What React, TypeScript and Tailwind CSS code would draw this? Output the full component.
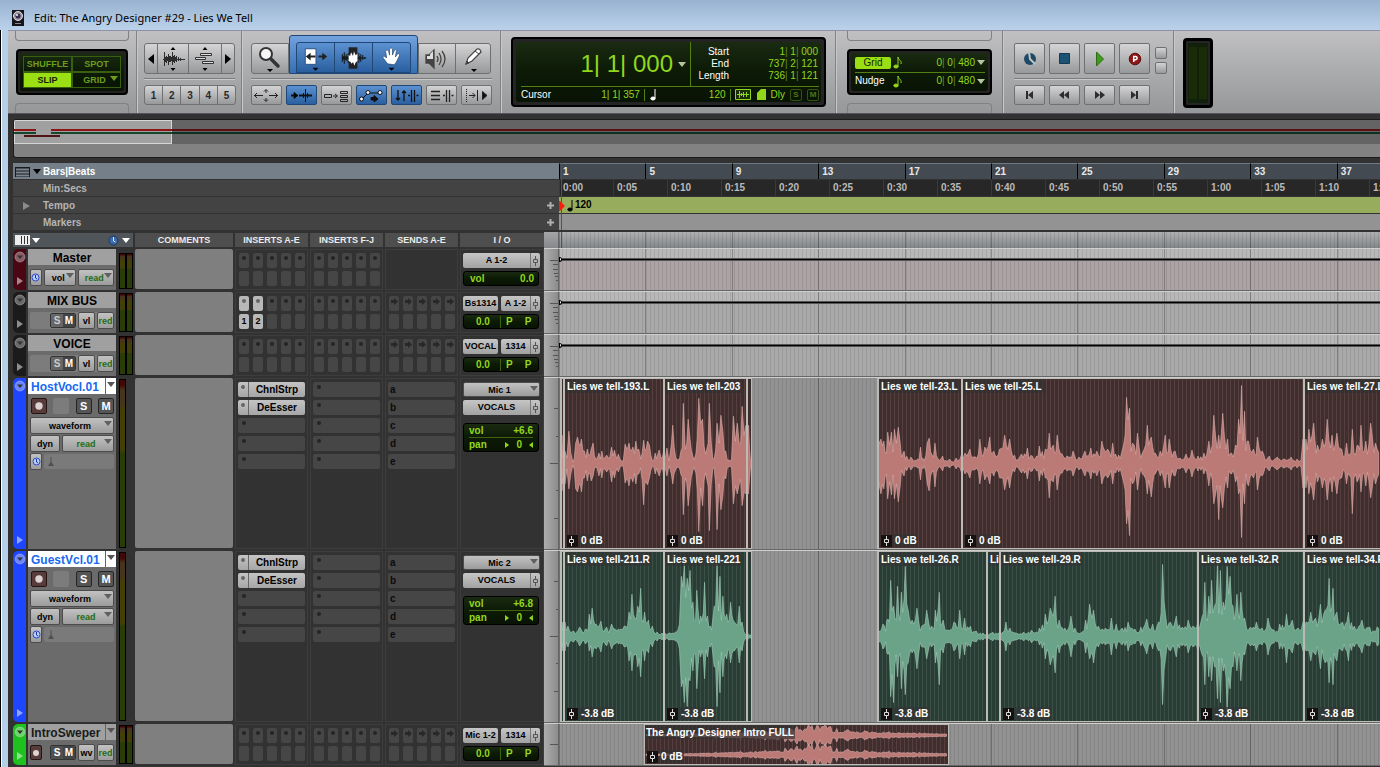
import React from "react";
import { clsx } from "clsx";

const SPAN = 821;
const pct = (v: number) => `${(v / SPAN) * 100}%`;
const BAR_CELLS = [1, 5, 9, 13, 17, 21, 25, 29, 33, 37];
const TIMES = Array.from({ length: 16 }, (_, i) => {
  const s = i * 5;
  return `${Math.floor(s / 60)}:${String(s % 60).padStart(2, "0")}`;
});

const BTN = "border border-[#4c4c4c] rounded-[2px] bg-linear-to-b from-[#c2c2c2] to-[#9c9c9c] font-bold";
const TOOL = "border border-[#6f7072] bg-linear-to-b from-[#d4d4d5] to-[#98999b] flex items-center justify-center";
const BLUE = "border border-[#1f4878] bg-linear-to-b from-[#5c92d2] to-[#2a5f9f] flex items-center justify-center";
const LCD = "bg-linear-to-b from-[#1a2b12] via-[#0c1a06] to-[#091304] text-[#92d61c]";

/* ---------- waveforms ---------- */

type Peak = [number, number, number?];

const HOST: Peak[] = [
  [560, 28, 27], [563, 12, 20], [565, 5], [567, 32, 25], [569, 10], [571, 1], [574, 20, 25], [576, 26, 28], [580, 24, 28], [583, 12, 14],
  [586, 14, 17], [590, 14, 17], [592, 20, 12], [596, 4], [598, 10, 12], [601, 12, 14], [604, 5], [606, 8], [609, 5], [611, 16, 18], [614, 13, 14],
  [618, 9, 8], [621, 2], [623, 2], [625, 19, 19], [629, 20, 22], [633, 16, 18], [636, 22, 20], [639, 14, 10], [641, 4], [644, 23, 41], [648, 22, 21],
  [650, 18, 14], [653, 2], [656, 10], [660, 13, 12], [662, 5], [665, 15, 12], [667, 2], [671, 38, 20], [674, 6], [678, 4], [682, 60, 51], [684, 14],
  [687, 44, 42], [689, 24], [693, 3], [695, 9], [698, 65, 68], [700, 40, 24], [702, 44, 42], [705, 9], [709, 60, 67], [711, 20], [714, 4], [717, 40, 66],
  [719, 20], [721, 48, 46], [723, 32], [726, 12, 15], [729, 3], [732, 4], [734, 47, 40], [736, 22], [738, 40, 30], [740, 20], [743, 57, 42], [745, 28],
  [747, 38, 30], [749, 15], [751, 2], [877, 20], [879, 24, 30], [882, 22, 25], [886, 31, 35], [888, 18], [890, 31], [893, 34, 35], [895, 20], [897, 36, 38],
  [899, 20, 22], [903, 12], [910, 6], [917, 4], [920, 16], [924, 2], [927, 20], [929, 25, 27], [932, 8], [935, 20, 23], [938, 4], [943, 7], [947, 2],
  [950, 4], [954, 1], [957, 5], [961, 4], [963, 10], [968, 14], [972, 6], [978, 24, 20], [983, 16], [988, 26, 20], [992, 12], [998, 14], [1003, 28, 26],
  [1008, 24], [1013, 8], [1020, 9], [1026, 15], [1031, 7], [1038, 17], [1044, 14], [1048, 30, 34], [1052, 18], [1056, 28, 26], [1061, 9], [1066, 7],
  [1072, 12], [1078, 6], [1084, 12], [1090, 15], [1096, 12], [1101, 22, 20], [1107, 14], [1112, 20], [1118, 8], [1123, 18], [1126, 66, 60], [1129, 55, 72],
  [1132, 20], [1137, 30, 26], [1142, 10], [1147, 38, 30], [1151, 26, 33], [1155, 10], [1160, 12], [1165, 28, 24], [1169, 24], [1175, 12], [1180, 5],
  [1186, 9], [1192, 13], [1198, 7], [1204, 10], [1209, 22], [1214, 48, 40], [1219, 28, 56], [1223, 50, 44], [1228, 24], [1232, 10], [1236, 18],
  [1239, 44, 30], [1242, 78, 74], [1245, 52, 40], [1249, 22], [1254, 14], [1258, 26], [1263, 12], [1270, 7], [1278, 6], [1285, 4], [1292, 6], [1298, 4],
  [1302, 3], [1304, 24], [1307, 34, 30], [1312, 40, 36], [1316, 18], [1321, 24], [1326, 44, 36], [1331, 28], [1336, 30], [1341, 14], [1346, 20],
  [1352, 34, 50], [1357, 18], [1361, 38, 28], [1366, 22], [1371, 40, 34], [1376, 20], [1381, 30],
];

const GUEST: Peak[] = [
  [560, 8], [563, 14], [566, 10], [572, 5], [578, 9], [584, 7], [588, 22, 14], [591, 28, 20], [595, 12], [600, 15], [606, 9], [611, 12], [618, 7],
  [624, 10], [629, 24], [632, 42, 34], [635, 18], [638, 30], [641, 48, 40], [645, 24], [649, 16], [653, 10], [658, 4], [663, 3], [668, 3], [674, 4],
  [678, 12], [680, 60, 50], [683, 72, 66], [686, 58, 70], [689, 66, 44], [692, 34], [696, 46, 52], [700, 20], [704, 54, 42], [707, 20], [710, 10],
  [714, 30], [717, 72, 70], [720, 60, 56], [723, 40], [727, 22], [731, 34, 26], [735, 14], [740, 30, 26], [743, 14], [746, 2], [751, 1], [877, 5],
  [881, 12], [885, 16], [889, 56, 60], [892, 30, 66], [896, 50, 40], [900, 44, 52], [904, 70, 58], [907, 26], [911, 16], [916, 28, 32], [921, 10],
  [926, 26, 22], [931, 10], [935, 26], [939, 44, 48], [943, 16], [948, 6], [954, 14], [960, 26, 22], [965, 18], [971, 10], [977, 5], [984, 3], [992, 4],
  [1000, 3], [1004, 14], [1008, 8], [1014, 3], [1022, 4], [1030, 6], [1038, 8], [1044, 22], [1049, 28], [1054, 40, 36], [1058, 16], [1064, 8],
  [1070, 20], [1074, 8], [1080, 3], [1085, 16], [1089, 32, 22], [1093, 26], [1098, 10], [1105, 8], [1111, 18], [1116, 12], [1122, 8], [1128, 14],
  [1135, 7], [1141, 9], [1147, 17], [1153, 12], [1159, 14], [1163, 72, 68], [1166, 22], [1171, 14], [1177, 20], [1183, 9], [1189, 16], [1194, 10],
  [1199, 14], [1203, 54, 48], [1207, 40], [1210, 56, 44], [1213, 30], [1216, 72, 62], [1219, 66], [1222, 34], [1226, 70, 74], [1229, 60, 52], [1232, 30],
  [1236, 42, 34], [1240, 44], [1244, 18], [1250, 9], [1256, 14], [1262, 8], [1268, 18], [1274, 6], [1280, 12], [1287, 22, 26], [1293, 16], [1299, 8],
  [1304, 14], [1309, 24], [1314, 18], [1319, 32], [1324, 26], [1328, 58, 46], [1332, 48], [1336, 24], [1342, 14], [1348, 24], [1354, 10], [1362, 16],
  [1370, 9], [1381, 14],
];

const INTRO: Peak[] = [
  [645, 0], [690, 1], [715, 2], [740, 3], [765, 4], [785, 6], [797, 8], [804, 5], [808, 14], [812, 9], [817, 15], [822, 8], [826, 15], [831, 8],
  [837, 6], [848, 5], [865, 4], [890, 3], [920, 2], [949, 1],
];

function wavePath(peaks: Peak[], mid: number, limit = 200) {
  const top: string[] = [];
  const low: string[] = [];
  for (let i = 0; i < peaks.length - 1; i++) {
    const [x0, u0, d0 = u0] = peaks[i];
    const [x1, u1, d1 = u1] = peaks[i + 1];
    const n = Math.max(1, Math.round((x1 - x0) / 1.5));
    for (let k = 0; k < n; k++) {
      const t = k / n;
      const x = x0 + (x1 - x0) * t;
      const r = Math.abs(Math.sin(x * 12.9898) * 43758.5453) % 1;
      const j = k === 0 ? 1 : 0.3 + 0.5 * r;
      const up = Math.min(limit, (u0 + (u1 - u0) * t) * j);
      const dn = Math.min(limit, (d0 + (d1 - d0) * t) * j);
      top.push(`${x.toFixed(1)},${(mid - up - 0.5).toFixed(1)}`);
      low.push(`${x.toFixed(1)},${(mid + dn + 0.5).toFixed(1)}`);
    }
  }
  return `M${top.join("L")}L${low.reverse().join("L")}Z`;
}

const HOST_PATH = wavePath(HOST, 85);
const GUEST_PATH = wavePath(GUEST, 85);
const INTRO_PATH = wavePath(INTRO, 10, 9) + wavePath(INTRO, 29, 9);

/* ---------- small pieces ---------- */

function Caret({ className = "fill-[#555]" }: { className?: string }) {
  return (
    <svg className={clsx("shrink-0", className)} width="8" height="5" viewBox="0 0 8 5"><path d="M0 0h8L4 5z" /></svg>
  );
}

function Fader() {
  return (
    <svg width="8" height="12" viewBox="0 0 8 12" fill="none" stroke="currentColor"><path d="M3.500 1v3M3.500 8v3M1.500 4.500h4v3h-4z" /></svg>
  );
}

function Clock() {
  return (
    <svg width="9" height="9" viewBox="0 0 9 9"><circle cx="4.500" cy="4.500" r="3.500" fill="#b9ccff" stroke="#2648c8" /><path d="M4.500 2v3l1.500 1" fill="none" stroke="#1d3599" /></svg>
  );
}

function Note({ flag = false }: { flag?: boolean }) {
  return (
    <svg width="10" height="13" viewBox="0 0 10 13" fill="currentColor" stroke="currentColor">
      <ellipse cx="3" cy="10.500" rx="2.200" ry="1.500" /><path d="M5 10V1" fill="none" />
      {flag && <path d="M5 1c0 3 4 3 3 7" fill="none" />}
    </svg>
  );
}

function Drop({ label, value, className, caret = true, tone = "text-black" }: { label: string; value: string; className?: string; caret?: boolean; tone?: string }) {
  return (
    <div className={clsx("relative", className)}>
      <select aria-label={label} className={clsx(BTN, tone, "block h-full w-full appearance-none px-1 text-[9px] leading-3", caret ? "pr-2" : "", "[text-align-last:center]")}>
        <option>{value}</option>
      </select>
      {caret && <span className="pointer-events-none absolute top-1 right-[2px]"><Caret className="fill-[#606060]" /></span>}
    </div>
  );
}

/* ---------- toolbar ---------- */

function Tray({ bottom = false }: { bottom?: boolean }) {
  return <div className={clsx("h-[10px] border border-[#808184]", bottom ? "rounded-t-[4px] border-b-0" : "rounded-b-[4px] border-t-0")} />;
}

function Groove({ className }: { className?: string }) {
  return <div className={clsx("mt-1 mb-[5px] h-[2px] border-t border-[#7b7c7e] bg-[#c8c8ca]", className)} />;
}

function Modes() {
  const cell = "flex items-center justify-center border border-[#3b5f10] text-[9px] font-bold leading-3";
  return (
    <section aria-label="Edit modes" className="flex w-[129px] shrink-0 flex-col justify-between border-r border-[#808184] px-[7px]">
      <Tray />
      <div className="mx-px h-[46px] rounded-[4px] border-2 border-black bg-[#222] p-[2px]">
        <div className={clsx(LCD, "grid h-full grid-cols-2 grid-rows-2 rounded-[2px] p-[3px] text-[#6e9c1c]!")}>
          <button className={cell}>SHUFFLE</button>
          <button className={cell}>SPOT</button>
          <button className={clsx(cell, "bg-[#9ade14] text-[#14240a]")}>SLIP</button>
          <button className={clsx(cell, "gap-1 pl-2")}>GRID <Caret className="mb-1 fill-[#6e9c1c]" /></button>
        </div>
      </div>
      <Tray bottom />
    </section>
  );
}

function ZoomControls() {
  return (
    <section aria-label="Zoom" className="flex w-[105px] shrink-0 flex-col border-r border-l border-[#808184] border-l-[#c8c8ca] px-[6px] pt-3">
      <div className="flex h-[31px]">
        <button aria-label="Zoom out" className={clsx(TOOL, "w-[14px] rounded-l-[3px]")}><svg width="6" height="10" viewBox="0 0 6 10"><path d="M6 0v10L0 5z" /></svg></button>
        <button aria-label="Audio zoom" className={clsx(TOOL, "-ml-px w-8")}>
          <svg width="26" height="26" viewBox="0 0 26 26"><path d="M10.500 4h5L13 1zM10.500 22h5L13 25z" /><path d="M4.500 6v14M6.500 10v7M8.500 8v11M10.500 10v6M12.500 6v13M14.500 9v8M16.500 10v6M18.500 11v4M20.500 12v3M3 13.500h22M5.500 11v5M7.500 11v4M9.500 10v6M11.500 11v4M13.500 10v6M15.500 11v4" stroke="#2c2c2c" fill="none" /></svg>
        </button>
        <button aria-label="MIDI zoom" className={clsx(TOOL, "-ml-px w-[34px]")}>
          <svg width="26" height="26" viewBox="0 0 26 26"><path d="M10.500 4h5L13 1zM10.500 22h5L13 25z" /><path d="M8.500 7.500h11v2h-11zM3.500 11.500h10v2h-10zM10.500 15.500h11v2h-11z" fill="#ddd" stroke="#333" /></svg>
        </button>
        <button aria-label="Zoom in" className={clsx(TOOL, "-ml-px w-[14px] rounded-r-[3px]")}><svg width="6" height="10" viewBox="0 0 6 10"><path d="M0 0v10l6-5z" /></svg></button>
      </div>
      <Groove />
      <div className="flex h-5">
        {[1, 2, 3, 4, 5].map((n) => (
          <button key={n} className={clsx(TOOL, "-mr-px flex-1 text-[10px] font-bold text-[#2a2a2a]", n === 1 && "rounded-l-[3px]", n === 5 && "rounded-r-[3px]")}>{n}</button>
        ))}
      </div>
    </section>
  );
}

const ARROWHEAD = <path d="M16 25h6l-3 3z" />;

function Tools() {
  const small: [string, boolean, React.ReactNode][] = [
    ["Zoom toggle", false, <g key="a" fill="none" stroke="#222"><path d="M1 8.500h9M16 8.500h9M13 3v3M13 11v3" /><path d="M4 6L1.500 8.500 4 11M22 6l2.500 2.500L22 11M11 4.500l2-2 2 2M11 12.500l2 2 2-2" /></g>],
    ["Tab to transients", true, <g key="b" stroke="#111"><path d="M3 8.500h5M11 8.500h13" strokeWidth="2" /><path d="M6 5.500l4 3-4 3zM17.500 2v13M15.500 6v5M19.500 6v5" /></g>],
    ["Mirrored MIDI", false, <g key="c" fill="none" stroke="#222"><path d="M1.500 7.500h7v3h-7zM10 9h4M12 7l2.500 2-2.500 2M17.500 4.500h7v2h-7zM17.500 8.500h7v2h-7zM17.500 12.500h7v2h-7z" /></g>],
    ["Automation follows edit", true, <g key="d" stroke="#111"><path d="M4 12L10 6h12" fill="none" /><g fill="#fff"><circle cx="3.500" cy="12" r="2" /><circle cx="10" cy="5.500" r="2" /><circle cx="22" cy="5.500" r="2" /></g><path d="M13 10.500h3v-2l4 3.500-4 3v-2h-3z" fill="#111" /></g>],
    ["Link timeline", true, <g key="e" fill="none" stroke="#111" strokeWidth="1.300"><path d="M5 3v10M3 11l2 2 2-2M11 14V4M9 6l2-2 2 2M18.500 3v12M21.500 3v12M15 8.500h2M23.500 8.500h2" /></g>],
    ["Link track", false, <g key="f" fill="none" stroke="#222" strokeWidth="1.300"><path d="M3 4.500h9M3 8.500h9M3 12.500h9M18.500 3v12M21.500 3v12M15 8.500h2M23.500 8.500h2" /></g>],
    ["Insertion follows playback", false, <g key="g" stroke="#222"><path d="M3.500 2v13" strokeDasharray="1 1" /><path d="M6 8.500h6M9.500 6l2.500 2.500-2.500 2.500M14.500 3v11" fill="none" /><path d="M19.500 4.500v8l4.500-4z" fill="#111" /></g>],
  ];
  return (
    <section aria-label="Tools" className="w-[259px] shrink-0 border-r border-l border-[#808184] border-l-[#c8c8ca] px-2 pt-1">
      <div className="flex h-[39px] items-end">
        <button aria-label="Zoomer" className={clsx(TOOL, "h-[31px] w-[38px] rounded-l-[3px]")}>
          <svg width="36" height="30" viewBox="0 0 36 30"><circle cx="14" cy="10" r="6" fill="#f6f6f6" stroke="#333" strokeWidth="2" /><path d="M19 15l7 7" stroke="#333" strokeWidth="3.500" strokeLinecap="round" /><path d="M15 25h6l-3 3z" /></svg>
        </button>
        <div className="flex h-[39px] items-end rounded-t-[3px] border border-[#1f4878] bg-linear-to-b from-[#73a2de] to-[#356fb2] px-[6px]">
          <button aria-label="Trimmer" className={clsx(BLUE, "h-[31px] w-[39px] rounded-tl-[3px]")}>
            <svg width="38" height="30" viewBox="0 0 38 30"><path d="M8.500 5.500h11v16h-11z" fill="#fff" stroke="#2a4f80" /><path d="M9 13.500l5-4v3h5v2h-5v3zM31 13.500l-5-4v3h-4v2h4v3z" fill="#222" />{ARROWHEAD}</svg>
          </button>
          <button aria-label="Selector" className={clsx(BLUE, "-ml-px h-[31px] w-[39px]")}>
            <svg width="38" height="30" viewBox="0 0 38 30"><path d="M14 4h9v22h-9z" fill="#222" /><path d="M7.500 11v8M9.500 9v12M11.500 11v7M13.500 10v10M24.500 10v10M26.500 11v8M28.500 12v5M30.500 14v2M7 15h25M8.500 13v4M10.500 13v4M12.500 13v4M25.500 13v4" stroke="#111" fill="none" /><path d="M14 12l1.500 1 1-4 2 4 1-5 1.500 4 2-1v7l-2 2-1 3-1.500-4-1.500 2-1-2-2-1z" fill="#fff" /></svg>
          </button>
          <button aria-label="Grabber" className={clsx(BLUE, "-ml-px h-[31px] w-[39px] rounded-tr-[3px]")}>
            <svg width="38" height="30" viewBox="0 0 38 30"><path d="M15 21c-2-3-4-5-5-7 1-2 3 0 4 1l-1-7c0-1 2-2 3 0l1 4V6c1-2 3-1 3 0v6l2-5c1-1 3 0 2 1l-1 6 2-3c2-1 3 0 2 2l-3 6-2 3z" fill="#fff" stroke="#244a78" strokeWidth=".7" />{ARROWHEAD}</svg>
          </button>
        </div>
        <button aria-label="Scrubber" className={clsx(TOOL, "h-[31px] w-[38px]")}>
          <svg width="30" height="26" viewBox="0 0 30 26" fill="none" stroke="#444" strokeWidth="1.300"><path d="M4 9h3l5-5v18l-5-5H4z" fill="#444" /><path d="M5 10h3V8l3-3v8H5z" fill="#ddd" stroke="none" /><path d="M15 10q2 3 0 6M17 7q4 6 0 12M20 5q6 8 0 16" /></svg>
        </button>
        <button aria-label="Pencil" className={clsx(TOOL, "-ml-px h-[31px] w-9 rounded-r-[3px]")}>
          <svg width="34" height="30" viewBox="0 0 34 30"><path d="M10 20l2-6L21 5q3-1 4 3l-9 9z" fill="#fff" stroke="#444" strokeWidth="1.200" /><path d="M10 20l1-3 2 2zM19 7l4 3" stroke="#444" fill="#333" /><path d="M15 25h6l-3 3z" /></svg>
        </button>
      </div>
      <Groove />
      <div className="flex h-5 gap-1">
        {small.map(([name, on, icon]) => (
          <button key={name} aria-label={name} aria-pressed={on} className={clsx(on ? BLUE : TOOL, "w-[31px] rounded-[2px]")}>
            <svg width="27" height="17" viewBox="0 0 27 17">{icon}</svg>
          </button>
        ))}
      </div>
    </section>
  );
}

function Bar() {
  return <span className="text-[#5d8c14]">|</span>;
}

function Counter() {
  const rows: [string, string[]][] = [["Start", ["1", " 1", " 000"]], ["End", ["737", " 2", " 121"]], ["Length", ["736", " 1", " 121"]]];
  return (
    <section aria-label="Counters" className="w-[335px] shrink-0 border-r border-l border-[#808184] border-l-[#c8c8ca] px-[9px] py-[6px]">
      <div className="h-[70px] rounded-[4px] border-2 border-black bg-[#242424] p-[3px]">
        <div className={clsx(LCD, "flex h-full flex-col rounded-[3px] pr-[2px] pl-[5px] text-[10px] leading-3")}>
          <div className="flex h-[45px] border-b border-[#517f12]">
            <div className="flex flex-1 items-center justify-end gap-[5px] pr-1 text-[24px] leading-6">
              <span className="whitespace-pre">1| 1| 000</span>
              <Caret className="fill-[#b7c4a0]" />
            </div>
            <dl className="grid w-[129px] grid-cols-[38px_1fr] content-start gap-x-1 border-l border-[#517f12] pt-1 text-right">
              {rows.map(([k, v]) => (
                <React.Fragment key={k}>
                  <dt className="text-white">{k}</dt>
                  <dd className="whitespace-pre pr-px">{v[0]}<Bar />{v[1]}<Bar />{v[2]}</dd>
                </React.Fragment>
              ))}
            </dl>
          </div>
          <div className="flex flex-1 items-center">
            <span className="text-white">Cursor</span>
            <span className="ml-auto whitespace-pre border-r border-[#517f12] pr-1">1| 1| 357</span>
            <span className="ml-[5px] text-white"><Note /></span>
            <span className="ml-[49px] border-r border-[#517f12] pr-1">120</span>
            <svg className="ml-1" width="16" height="11" viewBox="0 0 16 11"><path d="M.5.5h15v10H.500z" fill="#1b300a" stroke="#92d61c" /><path d="M2 5.500h12M4.500 2v7M6.500 4v3M8.500 3v5M11.500 3v5" stroke="#92d61c" /></svg>
            <svg className="ml-[6px]" width="9" height="11" viewBox="0 0 9 11"><path d="M4 0h5v11H0V4z" fill="#92d61c" /></svg>
            <span className="ml-[5px]">Dly</span>
            <button className="ml-[5px] flex size-3 items-center justify-center rounded-[2px] border border-[#36540f] text-[8px] font-bold leading-3 text-[#4d7715]">S</button>
            <button className="ml-[5px] flex size-3 items-center justify-center rounded-[2px] border border-[#36540f] text-[8px] font-bold leading-3 text-[#4d7715]">M</button>
          </div>
        </div>
      </div>
    </section>
  );
}

function GridNudge() {
  return (
    <section aria-label="Grid and nudge" className="flex w-[167px] shrink-0 flex-col justify-between border-r border-l border-[#808184] border-l-[#c8c8ca] px-[10px]">
      <Tray />
      <div className="h-[46px] rounded-[4px] border-2 border-black bg-[#242424] p-[2px]">
        <div className={clsx(LCD, "flex h-full flex-col rounded-[3px] pr-[3px] pl-1 py-px text-[10px] leading-3")}>
          {["Grid", "Nudge"].map((name) => (
            <div key={name} className={clsx("flex flex-1 items-center", name === "Grid" && "border-b border-[#517f12]")}>
              <span className={clsx("w-9 rounded-[2px]", name === "Grid" ? "bg-[#9ade14] text-center text-[#14240a]" : "text-white")}>{name}</span>
              <span className="pl-[2px]"><Note flag /></span>
              <span className="ml-auto mr-[2px] whitespace-pre">0<Bar /> 0<Bar /> 480</span>
              <Caret className="fill-[#b7c4a0]" />
            </div>
          ))}
        </div>
      </div>
      <Tray bottom />
    </section>
  );
}

function Transport() {
  const big: [string, React.ReactNode][] = [
    ["Online", <g key="o"><circle cx="7" cy="7" r="6" fill="#1f4a66" /><path d="M6 0l1 7 5 5" stroke="#c4c4c6" strokeWidth="2" fill="none" /></g>],
    ["Stop", <path key="s" d="M1.500 1.500h10v10h-10z" fill="#1c5374" stroke="#143a52" />],
    ["Play", <path key="p" d="M3.500 0v14l7-7z" fill="#3f9a1d" stroke="#2d6e14" />],
    ["Record", <g key="r"><circle cx="7" cy="7" r="5.800" fill="#8c1717" stroke="#5e1010" /><path d="M5.700 10V4.500h1.800a1.600 1.600 0 010 3.200H6" fill="none" stroke="#fff" strokeWidth="1.500" /></g>],
  ];
  const small: [string, string][] = [
    ["Return to zero", "M4 1h2v8H4zM11 1v8L6 5z"],
    ["Rewind", "M7 1v8L2 5zM12 1v8L7 5z"],
    ["Fast forward", "M3 1v8l5-4zM8 1v8l5-4z"],
    ["Go to end", "M4 1v8l5-4zM9 1h2v8H9z"],
  ];
  return (
    <section aria-label="Transport" className="w-[171px] shrink-0 border-r border-l border-[#808184] border-l-[#c8c8ca] pl-[10px] pt-3">
      <div className="flex h-[31px] gap-1">
        {big.map(([name, icon]) => (
          <button key={name} aria-label={name} className={clsx(TOOL, "w-[31px] rounded-[2px]")}><svg width="14" height="14" viewBox="0 0 14 14">{icon}</svg></button>
        ))}
        <div className="flex flex-col justify-end gap-[3px] pl-px">
          <button aria-label="Pre-roll" className={clsx(TOOL, "size-3 rounded-[2px]")} />
          <button aria-label="Post-roll" className={clsx(TOOL, "size-3 rounded-[2px]")} />
        </div>
      </div>
      <Groove className="mr-6" />
      <div className="flex h-5 gap-1">
        {small.map(([name, d]) => (
          <button key={name} aria-label={name} className={clsx(TOOL, "w-[31px] rounded-[2px]")}><svg width="15" height="10" viewBox="0 0 15 10" fill="#2d2d2d"><path d={d} /></svg></button>
        ))}
      </div>
    </section>
  );
}

/* ---------- lane grid ---------- */

function Lines({ className = "border-black/25" }: { className?: string }) {
  return (
    <div className="pointer-events-none absolute inset-0 flex overflow-hidden">
      {BAR_CELLS.map((b) => <div key={b} className={clsx("shrink-0 border-l", className)} style={{ width: pct(86.42) }} />)}
    </div>
  );
}

const STRIPES = "bg-[repeating-linear-gradient(90deg,transparent_0px,transparent_3px,rgba(0,0,0,0.09)_3px,rgba(0,0,0,0.09)_4px)]";

function Ruler() {
  const left = "flex h-4 items-center pt-px text-[10px] font-bold leading-[15px] text-[#b5b5b5]";
  return (
    <div className="flex">
      <div className="flex w-[546px] shrink-0 flex-col gap-px">
        <div className={clsx(left, "bg-[#757f89] text-white!")}>
          <button aria-label="Ruler view" className="flex w-[30px] items-center gap-px pl-[2px]">
            <svg width="15" height="10" viewBox="0 0 15 10"><path d="M0 0h15v10H0z" fill="#181b1e" /><path d="M1 2.500h13M1 5.500h13M1 8.500h13" stroke="#7d868f" strokeWidth="2" /></svg>
            <span className="pl-[2px]"><Caret className="fill-black" /></span>
          </button>
          Bars|Beats
        </div>
        <div className={clsx(left, "bg-[#434343] pl-[30px]")}>Min:Secs</div>
        <div className={clsx(left, "bg-[#434343]")}>
          <span className="w-[30px] pl-[10px]"><svg width="7" height="8" viewBox="0 0 7 8"><path d="M0 0v8l7-4z" fill="#8c8c8c" /></svg></span>Tempo
          <button aria-label="Add tempo change" className="ml-auto pr-[5px]"><svg width="7" height="7" viewBox="0 0 7 7"><path d="M3.500 0v7M0 3.500h7" stroke="#b0b0b0" strokeWidth="2" /></svg></button>
        </div>
        <div className={clsx(left, "bg-[#434343] pl-[30px]")}>Markers
          <button aria-label="Add marker" className="ml-auto pr-[5px]"><svg width="7" height="7" viewBox="0 0 7 7"><path d="M3.500 0v7M0 3.500h7" stroke="#b0b0b0" strokeWidth="2" /></svg></button>
        </div>
      </div>
      <div className="relative flex min-w-0 flex-1 flex-col gap-px overflow-hidden text-[10px] font-bold leading-4">
        <div className="flex h-4 bg-[#444a51] text-[#e8e8e8]">
          {BAR_CELLS.map((b) => <div key={b} className="shrink-0 border-t border-l border-black border-t-[#707a84] pl-[3px] leading-[15px]" style={{ width: pct(86.42) }}>{b}</div>)}
        </div>
        <div className="flex h-4 bg-[#272727] text-[#bababa]">
          {TIMES.map((t) => <div key={t} className="shrink-0 border-l border-[#3a3a3a] pl-[3px]" style={{ width: pct(54) }}>{t}</div>)}
        </div>
        <div className="flex h-4 items-center bg-[#98ac5e] pl-[8px] text-black"><Note />
          <span className="-ml-[2px]">120</span>
        </div>
        <div className="h-4 bg-[#939393]" />
        <div className="absolute top-0 bottom-0 left-[2px] w-px bg-[#e01818]" />
        <svg className="absolute top-[38px] left-0" width="6" height="10" viewBox="0 0 6 10"><path d="M0 0h1l5 5-5 5H0z" fill="#f5200c" /></svg>
      </div>
    </div>
  );
}

/* ---------- tracks ---------- */

interface Track {
  name: string;
  tall?: boolean;
  strip: string;
  nameClass: string;
  kind: "master" | "bus" | "audio" | "intro";
  inserts?: string[];
  input: string;
  output: string;
  vol: string;
}

const TRACKS: Track[] = [
  { name: "Master", strip: "bg-[#4a0713]", nameClass: "bg-[#a0a0a0] text-black", kind: "master", input: "", output: "A 1-2", vol: "0.0" },
  { name: "MIX BUS", strip: "bg-[#1b1b1b]", nameClass: "bg-[#a0a0a0] text-black", kind: "bus", inserts: ["1", "2"], input: "Bs1314", output: "A 1-2", vol: "0.0" },
  { name: "VOICE", strip: "bg-[#1b1b1b]", nameClass: "bg-[#a0a0a0] text-black", kind: "bus", input: "VOCAL", output: "1314", vol: "0.0" },
  { name: "HostVocl.01", tall: true, strip: "bg-[#1f46ff]", nameClass: "bg-white text-[#1769f0]", kind: "audio", input: "Mic 1", output: "VOCALS", vol: "+6.6" },
  { name: "GuestVcl.01", tall: true, strip: "bg-[#1f46ff]", nameClass: "bg-white text-[#1769f0]", kind: "audio", input: "Mic 2", output: "VOCALS", vol: "+6.8" },
  { name: "IntroSweper", strip: "bg-[#1ec21e]", nameClass: "bg-[#a0a0a0] text-[#1a1a1a]", kind: "intro", input: "Mic 1-2", output: "1314", vol: "0.0" },
];

function Strip({ t }: { t: Track }) {
  return (
    <div className={clsx("flex w-[13px] shrink-0 flex-col items-center justify-between rounded-l-[5px] pt-[2px] pb-[5px]", t.strip)}>
      <button aria-label={`${t.name} options`}><svg className="block" width="12" height="12" viewBox="0 0 12 12"><circle cx="6" cy="6" r="5" fill="#fff" fillOpacity=".35" stroke="#ccc" strokeOpacity=".4" /><path d="M3 4.500h6L6 8z" fill="#333" /></svg></button>
      <button aria-label={`Expand ${t.name}`}><svg className="block" width="8" height="8" viewBox="0 0 8 8"><path d="M1 0v8l6-4z" fill="#fff" fillOpacity=".5" /></svg></button>
    </div>
  );
}

function RecordButton({ small = false }: { small?: boolean }) {
  return (
    <button aria-label="Record enable" className={clsx("flex items-center justify-center rounded-[2px] border border-[#241414] bg-[#583c3c]", small ? "h-[15px] w-3" : "size-4")}>
      <svg width="8" height="8" viewBox="0 0 8 8"><circle cx="4" cy="4" r={small ? 3 : 3.7} fill="#ddd3d3" /></svg>
    </button>
  );
}

function NamePanel({ t }: { t: Track }) {
  const sm = "flex size-4 items-center justify-center rounded-[2px] border border-[#252525] bg-[#555] text-[11px] font-bold leading-4 text-white";
  const dropdown = t.kind === "audio" || t.kind === "intro";
  return (
    <div className="ml-[2px] flex w-[88px] shrink-0 flex-col bg-[#6b6b6b]">
      <div className={clsx("flex h-4 items-center text-[12px] font-bold leading-4", t.nameClass, dropdown ? "justify-between pl-[3px]" : "justify-center")}>
        <span className="pt-px">{t.name}</span>
        {dropdown && <button aria-label="Playlists" className="flex h-4 w-[11px] justify-center border-l border-[#666] pt-1"><Caret /></button>}
      </div>
      {t.kind === "master" && (
        <div className="mt-1 flex h-[17px] gap-[2px] px-[2px]">
          <button aria-label="Timebase" className={clsx(BTN, "flex w-3 items-center justify-center")}><Clock /></button>
          <Drop label="Track view" value="vol" className="w-[33px]" />
          <Drop label="Automation" value="read" className="w-9" tone="text-[#1f6e12]" />
        </div>
      )}
      {(t.kind === "bus" || t.kind === "intro") && (
        <div className={clsx("mt-1 ml-[2px] flex h-[17px] w-[84px] items-center justify-end gap-[2px] rounded-[2px]", t.kind === "bus" && "bg-[#7c7c7c]")}>
          {t.kind === "intro" && <span className="mr-auto"><RecordButton small /></span>}
          <div className={clsx("flex h-[15px] w-[26px] overflow-hidden rounded-[2px] border border-[#333] text-[10px] font-bold leading-[13px]", t.kind === "bus" ? "text-[#ccc]" : "text-white")}>
            <button className={clsx("flex-1", t.kind === "bus" ? "bg-[#666]" : "bg-[#505050]")}>S</button>
            <button className="flex-1 bg-[#444] text-white">M</button>
          </div>
          <button className={clsx(BTN, "h-[17px] w-[17px] text-[9px] leading-3")}>{t.kind === "bus" ? "vl" : "wv"}</button>
          <button className={clsx(BTN, "h-[17px] w-[17px] text-[9px] leading-3 text-[#1f6e12]")}>red</button>
        </div>
      )}
      {t.kind === "audio" && (
        <div className="flex flex-col gap-px px-[2px] pt-1">
          <div className="mb-[2px] flex items-center justify-between pl-px">
            <RecordButton />
            <button aria-label="Input monitor" className="size-4 rounded-[2px] bg-[#7c7c7c]" />
            <button className={sm}>S</button>
            <button className={sm}>M</button>
          </div>
          <Drop label="Track view" value="waveform" className="h-[17px]" />
          <div className="flex h-[17px] gap-[2px]">
            <button className={clsx(BTN, "w-[30px] text-[9px] leading-3")}>dyn</button>
            <Drop label="Automation" value="read" className="flex-1" tone="text-[#1f6e12]" />
          </div>
          <div className="flex h-[17px] gap-[2px]">
            <button aria-label="Timebase" className={clsx(BTN, "flex w-3 items-center justify-center")}><Clock /></button>
            <button aria-label="Elastic audio" className="my-px flex-1 rounded-[2px] bg-[#7a7a7a] pl-[3px]"><svg width="8" height="9" viewBox="0 0 8 9"><path d="M3.500 0h1v5L7 9H1l2.500-4z" fill="#505050" /></svg></button>
          </div>
        </div>
      )}
    </div>
  );
}

function Meter({ t }: { t: Track }) {
  const bar = "w-[7px] border border-black bg-[linear-gradient(#450606_0%,#450606_3%,#46351c_6%,#46351c_14%,#433f08_18%,#433f08_42%,#2a3d09_44%,#2a3d09_100%)]";
  return (
    <div className={clsx("ml-[3px] flex w-4 shrink-0 pb-px", t.kind === "master" ? "pt-1" : "pt-px")}>
      <div className={bar} />
      {!t.tall && <div className={bar} />}
    </div>
  );
}

const COLUMN = "shrink-0 border border-[#3d3d3d] bg-[#323232]";

function SlotGrid({ kind, filled = [] }: { kind: "insert" | "send"; filled?: string[] }) {
  return (
    <div className="grid grid-cols-5 gap-x-1 gap-y-[3px] pt-[3px] pr-[2px] pl-[3px]">
      {[0, 1].map((r) => [0, 1, 2, 3, 4].map((c) => {
        const on = c < filled.length;
        return (
          <button key={`${r}${c}`} aria-label={`${kind} slot`} className={clsx("flex h-[15px] w-[10px] justify-center rounded-[2px] text-[9px] font-bold leading-[15px]", on ? "bg-[#b8b8b8] text-black" : "bg-[#464646]")}>
            {r === 0 && kind === "insert" && <span className={clsx("mt-[3px] size-1 rounded-full", on ? "bg-[#666]" : "bg-[#252525]")} />}
            {r === 0 && kind === "send" && <svg className="mt-[2px]" width="7" height="7" viewBox="0 0 7 7"><path d="M0 2h3V0l4 3.500L3 7V5H0z" fill="#282828" /></svg>}
            {r === 1 && on && filled[c]}
          </button>
        );
      }))}
    </div>
  );
}

function InsertList({ names }: { names: string[] }) {
  return (
    <div className="flex flex-col gap-[3px] pt-[3px] pr-[2px] pl-[2px]">
      {[0, 1, 2, 3, 4].map((i) => (
        <button key={i} aria-label={names[i] ?? "Empty insert"} className={clsx("flex h-[15px] w-[67px] rounded-[2px] text-[10px] font-bold leading-4", names[i] ? "bg-linear-to-b from-[#c4c4c4] to-[#a6a6a6] text-black" : "bg-[#464646]")}>
          <span className={clsx("flex h-[15px] w-[11px] shrink-0 justify-center pt-[3px]", names[i] && "border-r border-[#666]")}><span className={clsx("size-1 rounded-full", names[i] ? "bg-[#666]" : "bg-[#252525]")} /></span>
          <span className="flex-1 text-center">{names[i]}</span>
        </button>
      ))}
    </div>
  );
}

function Output({ value, className }: { value: string; className: string }) {
  return (
    <div className={clsx("flex h-[15px] overflow-hidden rounded-[2px] bg-linear-to-b from-[#c6c6c6] to-[#a2a2a2] text-[#555]", className)}>
      <button className="min-w-0 flex-1 text-[9px] font-bold leading-[15px] text-black">{value}</button>
      <button aria-label="Output window" className="flex w-[10px] items-center justify-center border-l border-[#777]"><Fader /></button>
    </div>
  );
}

function IO({ t }: { t: Track }) {
  const lcd = clsx(LCD, "rounded-[3px] border border-black text-[10px] font-bold leading-3");
  return (
    <div className="flex flex-col gap-[3px] px-[2px] pt-[3px]">
      {t.kind === "master" && <Output value={t.output} className="w-[77px]" />}
      {(t.kind === "bus" || t.kind === "intro") && (
        <div className="flex gap-[3px]">
          <button className="h-[15px] w-[35px] rounded-[2px] bg-linear-to-b from-[#c6c6c6] to-[#a2a2a2] text-[9px] font-bold leading-[15px] text-black">{t.input}</button>
          <Output value={t.output} className="w-[39px]" />
        </div>
      )}
      {t.kind === "audio" && (
        <>
          <Drop label="Input" value={t.input} className="h-[15px] w-[77px]" />
          <Output value={t.output} className="w-[77px]" />
          <div className={clsx(lcd, "mt-[5px] flex h-[29px] w-[76px] flex-col px-[5px]")}>
            <div className="flex h-[14px] items-center justify-between border-b border-[#3f6210]"><span>vol</span><span>{t.vol}</span></div>
            <div className="flex h-[13px] items-center"><span>pan</span>
              <svg className="ml-auto" width="4" height="6" viewBox="0 0 4 6"><path d="M0 0v6l4-3z" fill="#92d61c" /></svg>
              <span className="px-[7px]">0</span>
              <svg width="4" height="6" viewBox="0 0 4 6"><path d="M4 0v6L0 3z" fill="#92d61c" /></svg>
            </div>
          </div>
        </>
      )}
      {t.kind === "master" && <div className={clsx(lcd, "flex h-[15px] w-[76px] items-center justify-between pr-1 pl-[6px]")}><span>vol</span><span>{t.vol}</span></div>}
      {(t.kind === "bus" || t.kind === "intro") && (
        <div className={clsx(lcd, "flex h-[15px] w-[76px] items-center pl-3")}><span className="w-6">{t.vol}</span><span className="border-l border-[#3f6210] pl-[5px]">P</span><span className="ml-3">P</span></div>
      )}
    </div>
  );
}

function Scale({ t }: { t: Track }) {
  return (
    <div className="w-[15px] shrink-0 border-t border-r border-b border-[#666] border-t-[#d0d0d0] bg-linear-to-r from-[#aeaeae] to-[#8c8c8c]">
      <svg className="block w-full" height={t.tall ? 171 : 41} viewBox={`0 0 14 ${t.tall ? 171 : 41}`} fill="none" stroke="#555">
        {t.tall ? <path d="M10 30.500h4M12 58.500h2M6 85.500h8M12 112.500h2M10 140.500h4" />
          : t.kind === "intro" ? <path d="M6 20.500h8" />
            : <path d="M6 11.500h8M9 15.500h5M9 20.500h5M10 24.500h4M11 27.500h3M12 31.500h2" />}
      </svg>
    </div>
  );
}

interface ClipData { start: number; end: number; label: string; gain?: string }

const HOST_CLIPS: ClipData[] = [
  { start: 560, end: 564, label: "" },
  { start: 563, end: 664, label: "Lies we tell-193.L", gain: "0 dB" },
  { start: 663, end: 747, label: "Lies we tell-203", gain: "0 dB" },
  { start: 746, end: 752, label: "" },
  { start: 877, end: 962, label: "Lies we tell-23.L", gain: "0 dB" },
  { start: 961, end: 1304, label: "Lies we tell-25.L", gain: "0 dB" },
  { start: 1303, end: 1390, label: "Lies we tell-27.L", gain: "0 dB" },
];
const GUEST_CLIPS: ClipData[] = [
  { start: 560, end: 564, label: "" },
  { start: 563, end: 664, label: "Lies we tell-211.R", gain: "-3.8 dB" },
  { start: 663, end: 747, label: "Lies we tell-221", gain: "-3.8 dB" },
  { start: 746, end: 752, label: "" },
  { start: 877, end: 987, label: "Lies we tell-26.R", gain: "-3.8 dB" },
  { start: 986, end: 1000, label: "Li" },
  { start: 999, end: 1198, label: "Lies we tell-29.R", gain: "-3.8 dB" },
  { start: 1197, end: 1304, label: "Lies we tell-32.R", gain: "-3.8 dB" },
  { start: 1303, end: 1390, label: "Lies we tell-34.R", gain: "-3.8 dB" },
];
const INTRO_CLIPS: ClipData[] = [{ start: 644, end: 949, label: "The Angry Designer Intro FULL", gain: "0 dB" }];

function Clip({ c, path, tint }: { c: ClipData; path: string; tint: "red" | "green" | "intro" }) {
  const h = tint === "intro" ? 38 : 170;
  return (
    <div
      className={clsx("absolute top-0 bottom-0 overflow-hidden border border-[#bcbab4]", tint !== "intro" && "border-l-2", tint === "green" ? "bg-[#283d35]" : "bg-[#3e2e2e]")}
      style={{ left: pct(c.start - 559), width: pct(c.end - c.start) }}
    >
      <div className={clsx("absolute inset-0", tint === "green"
        ? "bg-[repeating-linear-gradient(90deg,transparent_0px,transparent_3px,#3c5048_3px,#3c5048_4px)]"
        : "bg-[repeating-linear-gradient(90deg,transparent_0px,transparent_3px,#573f3f_3px,#573f3f_4px)]")} />
      <svg className="absolute inset-0 h-full w-full" viewBox={`${c.start} 0 ${c.end - c.start} ${h}`} preserveAspectRatio="none">
        <path d={path} fill={tint === "green" ? "#6aa388" : "#bb7a76"} stroke={tint === "green" ? "#a3cdb9" : "#dbb0ac"} strokeWidth=".6" vectorEffect="non-scaling-stroke" />
      </svg>
      <div className="relative flex h-full flex-col items-start justify-between text-[10px] font-bold leading-[15px] whitespace-nowrap text-white">
        <span className={clsx("h-[14px] bg-[#333]/70 px-px", tint === "intro" || "ml-px")}>{c.label}</span>
        {c.gain && (
          <span className="ml-[2px] flex items-center gap-[2px] pb-px">
            <span className="flex h-3 w-[11px] items-center justify-center bg-[#171111] text-[#ddd]"><Fader /></span>
            <span className="bg-[#333]/70 px-px leading-[13px]">{c.gain}</span>
          </span>
        )}
      </div>
    </div>
  );
}

function Lane({ t }: { t: Track }) {
  const automation = t.kind === "master" || t.kind === "bus";
  const clips = t.name.startsWith("Host") ? HOST_CLIPS : t.name.startsWith("Guest") ? GUEST_CLIPS : t.kind === "intro" ? INTRO_CLIPS : [];
  const path = clips === HOST_CLIPS ? HOST_PATH : clips === GUEST_CLIPS ? GUEST_PATH : INTRO_PATH;
  return (
    <div className="relative min-w-0 flex-1 overflow-hidden border-t border-b border-[#666] border-t-[#cfcfcf] bg-[#929292]">
      {automation && (
        <div className="flex h-full flex-col">
          <div className="h-[10px] bg-[#b8b8b8]" />
          <div className={clsx("flex-1", t.kind === "master" ? "bg-[#aca4a4]" : "bg-[#a9a9a9]")} />
        </div>
      )}
      <div className={clsx("absolute inset-0", STRIPES)} />
      <Lines />
      {automation && <div className="absolute top-[9px] right-0 left-0 h-[3px] border-t border-b border-[#555] bg-black" />}
      {automation && <div className="absolute top-2 left-0 h-[5px] w-[3px] rounded-r-full border border-black bg-white" />}
      {clips.map((c) => <Clip key={c.start} c={c} path={path} tint={clips === GUEST_CLIPS ? "green" : clips === INTRO_CLIPS ? "intro" : "red"} />)}
    </div>
  );
}

function TrackRow({ t }: { t: Track }) {
  return (
    <div className={clsx("flex shrink-0", t.tall ? "h-[173px]" : "h-[43px]")}>
      <div className="flex w-[531px] shrink-0 py-px">
        <Strip t={t} />
        <NamePanel t={t} />
        <Meter t={t} />
        <textarea aria-label={`${t.name} comments`} className="mb-px w-[98px] shrink-0 resize-none rounded-[2px] bg-[#7f7f7f]" />
        <div className={clsx(COLUMN, "ml-[2px] w-[73px]")}>{t.tall ? <InsertList names={["ChnlStrp", "DeEsser"]} /> : <SlotGrid kind="insert" filled={t.inserts} />}</div>
        <div className={clsx(COLUMN, "ml-[2px] w-[73px]")}>{t.tall ? <InsertList names={[]} /> : <SlotGrid kind="insert" />}</div>
        <div className={clsx(COLUMN, "ml-[2px] w-[73px]")}>
          {t.tall ? (
            <div className="flex flex-col gap-[3px] pt-[3px] pl-[2px]">
              {["a", "b", "c", "d", "e"].map((s) => <button key={s} className="h-[15px] w-[67px] rounded-[2px] bg-[#464646] pl-[2px] text-left text-[10px] font-bold leading-4 text-[#0c0c0c]">{s}</button>)}
            </div>
          ) : t.kind !== "master" && <SlotGrid kind="send" />}
        </div>
        <div className={clsx(COLUMN, "ml-[2px] flex-1")}><IO t={t} /></div>
      </div>
      <Scale t={t} />
      <Lane t={t} />
    </div>
  );
}

function HeaderRow() {
  const h = "ml-[2px] h-[14px] w-[73px] shrink-0 bg-[#4e4e4e] text-center";
  return (
    <div className="flex h-[18px] text-[9px] font-bold leading-[14px] text-[#ececec]">
      <div className="flex w-[531px] shrink-0 pt-[3px]">
        <div className="flex h-[14px] w-[120px] shrink-0 items-center bg-[#50555a] pl-[2px]">
          <svg width="15" height="10" viewBox="0 0 15 10"><path d="M0 0h15v10H0z" fill="#eee" /><path d="M6.500 1v8M9.500 1v8M12.500 1v8" stroke="#333" /></svg>
          <span className="pl-[2px]"><Caret className="fill-white" /></span>
          <svg className="ml-auto" width="11" height="11" viewBox="0 0 11 11"><circle cx="5.500" cy="5.500" r="4.500" fill="#3c68ad" stroke="#1c3560" /><path d="M5.500 2v4l2 1" stroke="#dde8ff" fill="none" /></svg>
          <span className="px-[3px]"><Caret className="fill-white" /></span>
        </div>
        <div className={clsx(h, "w-[98px]!")}>COMMENTS</div>
        <div className={h}>INSERTS A-E</div>
        <div className={h}>INSERTS F-J</div>
        <div className={h}>SENDS A-E</div>
        <div className={clsx(h, "flex-1")}>I / O</div>
      </div>
      <div className="mt-[2px] w-[15px] shrink-0 border-r border-[#666] bg-linear-to-b from-[#a5a6a8] to-[#85878a]" />
      <div className="relative mt-[2px] min-w-0 flex-1 bg-linear-to-b from-[#afb0b1] to-[#838689]">
        <div className={clsx("absolute inset-0", STRIPES)} />
        <Lines />
        <div className="absolute top-0 bottom-0 left-[2px] w-px bg-[#e01818]" />
      </div>
    </div>
  );
}

export default function App() {
  return (
    <div className="flex h-screen flex-col overflow-hidden bg-[#323232] font-['Liberation_Sans',Arial,sans-serif]">
      <header className="flex h-[30px] shrink-0 items-center gap-[9px] bg-linear-to-b from-[#98b2d0] to-[#bbd2eb] pt-[6px] pl-[11px]">
        <svg width="14" height="16" viewBox="0 0 14 16"><path d="M1 0h12v16H1z" fill="#18141c" /><circle cx="7" cy="6" r="4.500" fill="#99a" stroke="#ddd" /><circle cx="7" cy="6" r="2.500" fill="#3a2850" /><circle cx="6" cy="5" r="1" fill="#fff" /><path d="M4 13.500h6" stroke="#888" /></svg>
        <h1 className="font-['Noto_Sans',sans-serif] text-[11px] leading-4 text-black">Edit: The Angry Designer #29 - Lies We Tell</h1>
      </header>
      <div className="flex min-h-0 flex-1">
        <div className="w-2 shrink-0 border-l border-black bg-linear-to-r from-white from-10% to-[#b5cfe9] to-20%" />
        <main className="flex min-w-0 flex-1 flex-col">
          <div className="flex h-[84px] shrink-0 overflow-hidden border-t border-b border-[#8f8fa6] border-b-[#55555f] bg-linear-to-b from-[#c0c0c3] to-[#969799]">
            <Modes />
            <ZoomControls />
            <Tools />
            <Counter />
            <GridNudge />
            <Transport />
            <div className="flex flex-1 border-l border-[#c8c8ca] px-2 pt-[7px]">
              <div className="h-[70px] w-[30px] rounded-[4px] border-3 border-black bg-[#242424] p-[2px]">
                <div className="flex h-full justify-center gap-[2px] bg-[#10200a] py-1"><span className="w-2 bg-[#1a2b08]" /><span className="w-2 bg-[#1a2b08]" /></div>
              </div>
            </div>
          </div>
          <div className="flex min-h-0 flex-1 flex-col pt-[5px] pl-[5px]">
            <div className="relative h-[39px] shrink-0 overflow-hidden rounded-l-[3px] border border-[#1c1c1c] border-r-0 bg-[#828282]">
              <div className="h-6 bg-[#646464]" />
              <div className="absolute top-0 left-0 h-6 w-[158px] border border-[#d5d5d5] bg-[#a0a0a0]" />
              <svg className="absolute top-0 left-0 h-6 w-full" aria-label="Session overview">
                <path d="M0 9h22v2H0zM37 9h1400v2H37z" fill="#8c1414" /><path d="M158 9h1300v2H158z" fill="#581012" />
                <path d="M0 12h22v2H0zM37 12h121v2H37z" fill="#17482f" /><path d="M158 12h1300v2H158z" fill="#0e3021" />
                <path d="M10 15h36v2H10z" fill="#511414" />
              </svg>
            </div>
            <div className="mt-[5px]"><Ruler /></div>
            <HeaderRow />
            {TRACKS.map((t) => <TrackRow key={t.name} t={t} />)}
          </div>
        </main>
      </div>
    </div>
  );
}
